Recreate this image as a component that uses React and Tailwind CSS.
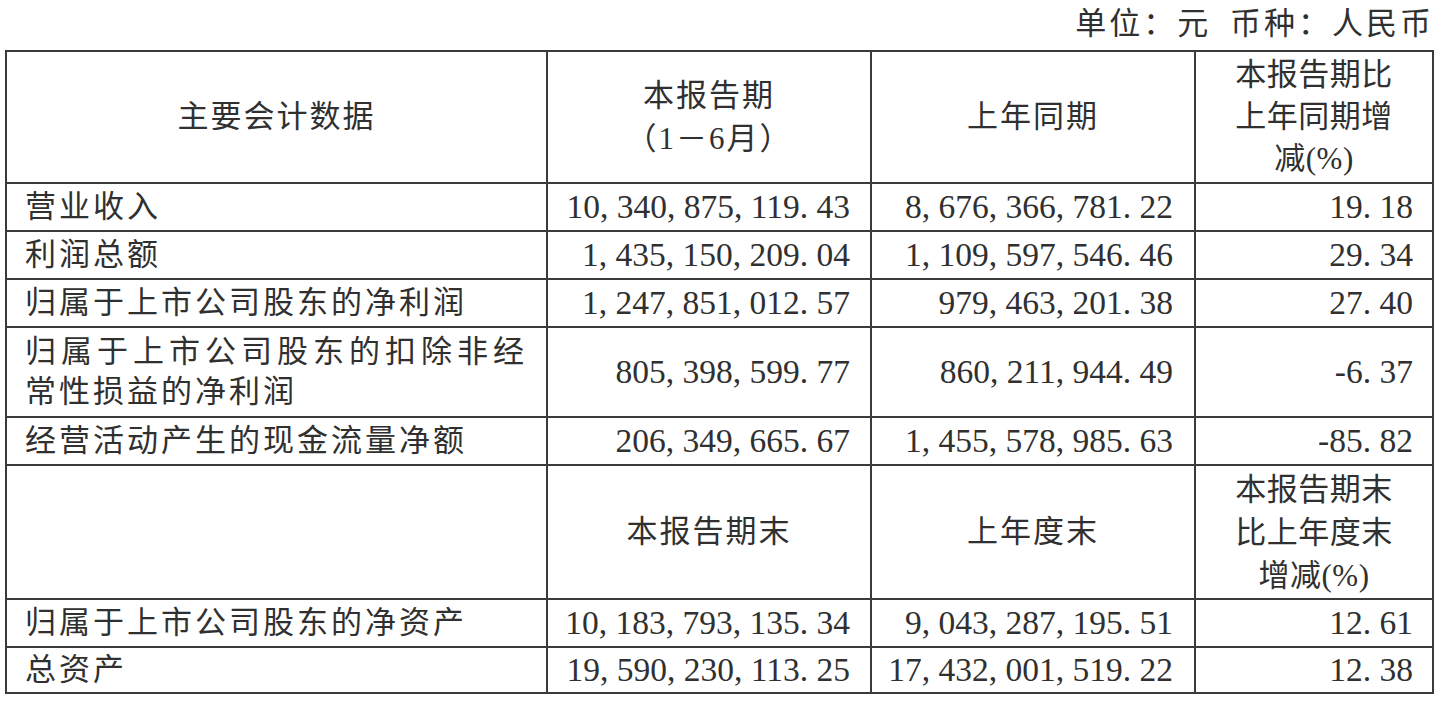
import React from "react";

const rows1 = [
  { label: ["营业收入"], a: "10,340,875,119.43", b: "8,676,366,781.22", c: "19.18" },
  { label: ["利润总额"], a: "1,435,150,209.04", b: "1,109,597,546.46", c: "29.34" },
  { label: ["归属于上市公司股东的净利润"], a: "1,247,851,012.57", b: "979,463,201.38", c: "27.40" },
  {
    label: ["归属于上市公司股东的扣除非经", "常性损益的净利润"],
    a: "805,398,599.77",
    b: "860,211,944.49",
    c: "-6.37",
  },
  { label: ["经营活动产生的现金流量净额"], a: "206,349,665.67", b: "1,455,578,985.63", c: "-85.82" },
];

const rows2 = [
  { label: ["归属于上市公司股东的净资产"], a: "10,183,793,135.34", b: "9,043,287,195.51", c: "12.61" },
  { label: ["总资产"], a: "19,590,230,113.25", b: "17,432,001,519.22", c: "12.38" },
];

// SimSun style numbers: comma and dot take a full half-width cell
const Num = ({ v }) => (
  <span className="whitespace-nowrap">
    {v.split("").map((ch, i) =>
      ch === "," || ch === "." ? (
        <span key={i} className="inline-block w-[0.5em] text-left">
          {ch}
        </span>
      ) : (
        <React.Fragment key={i}>{ch}</React.Fragment>
      )
    )}
  </span>
);

const cell = "border-r-2 border-b-2 border-[#3a3a3a] flex items-center";

const DataRow = ({ r }) => {
  const tall = r.label.length > 1;
  return (
    <>
      <div className={`${cell} pl-[18px] tracking-[3px] leading-[40px]`}>
        <div>
          {r.label.map((l, i) => (
            <div key={i} className={tall && i === 0 ? "tracking-[5px]" : ""}>
              {l}
            </div>
          ))}
        </div>
      </div>
      <div className={`${cell} justify-end pr-[20px] text-[33.5px]`}>
        <Num v={r.a} />
      </div>
      <div className={`${cell} justify-end pr-[21px] text-[33.5px]`}>
        <Num v={r.b} />
      </div>
      <div className={`${cell} justify-end pr-[19px] text-[33.5px]`}>
        <Num v={r.c} />
      </div>
    </>
  );
};

export default function App() {
  return (
    <div
      className="w-[1440px] h-[702px] bg-white text-[#303030] text-[31px] pl-[5px] overflow-hidden"
      style={{ fontFamily: '"Liberation Serif", "Noto Sans CJK SC", serif' }}
    >
      <div className="w-[1429px] h-[50px] flex items-center justify-end pb-[2px] tracking-[3px] [word-spacing:8px]">
        单位：元 币种：人民币
      </div>
      <div className="w-[1429px] grid grid-cols-[541px_324px_324px_238px] grid-rows-[132px_48px_48px_48px_90px_48px_134px_48px_46px] border-l-2 border-t-2 border-[#3a3a3a]">
        <div className={`${cell} justify-center tracking-[2px]`}>主要会计数据</div>
        <div className={`${cell} justify-center text-center leading-[43px] tracking-[2px]`}>
          <div>
            <div>本报告期</div>
            <div>（1－6月）</div>
          </div>
        </div>
        <div className={`${cell} justify-center tracking-[2px]`}>上年同期</div>
        <div className={`${cell} justify-center text-center leading-[42px] tracking-[0.5px]`}>
          <div>
            <div>本报告期比</div>
            <div>上年同期增</div>
            <div>减(%)</div>
          </div>
        </div>
        {rows1.map((r, i) => (
          <DataRow key={i} r={r} />
        ))}
        <div className={cell}></div>
        <div className={`${cell} justify-center tracking-[2px]`}>本报告期末</div>
        <div className={`${cell} justify-center tracking-[2px]`}>上年度末</div>
        <div className={`${cell} justify-center text-center leading-[43px] tracking-[0.5px]`}>
          <div>
            <div>本报告期末</div>
            <div>比上年度末</div>
            <div>增减(%)</div>
          </div>
        </div>
        {rows2.map((r, i) => (
          <DataRow key={i} r={r} />
        ))}
      </div>
    </div>
  );
}
